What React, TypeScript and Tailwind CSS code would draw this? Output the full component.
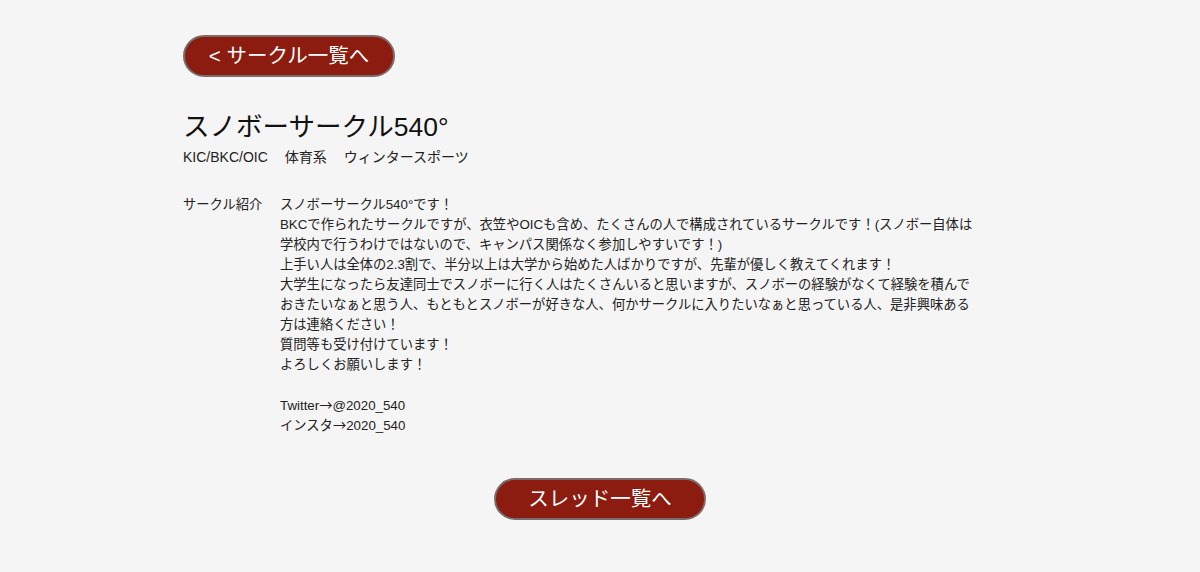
import React from "react";

const Arrow = () => (
  <span style={{ fontFamily: '"Noto Sans CJK JP", sans-serif' }}>→</span>
);

const lines: React.ReactNode[] = [
  "スノボーサークル540°です！",
  "BKCで作られたサークルですが、衣笠やOICも含め、たくさんの人で構成されているサークルです！(スノボー自体は",
  "学校内で行うわけではないので、キャンパス関係なく参加しやすいです！)",
  "上手い人は全体の2.3割で、半分以上は大学から始めた人ばかりですが、先輩が優しく教えてくれます！",
  "大学生になったら友達同士でスノボーに行く人はたくさんいると思いますが、スノボーの経験がなくて経験を積んで",
  "おきたいなぁと思う人、もともとスノボーが好きな人、何かサークルに入りたいなぁと思っている人、是非興味ある",
  "方は連絡ください！",
  "質問等も受け付けています！",
  "よろしくお願いします！",
  "",
  <>
    Twitter
    <Arrow />
    @2020_540
  </>,
  <>
    インスタ
    <Arrow />
    2020_540
  </>,
];

export default function App() {
  return (
    <div
      className="min-h-[572px] w-full bg-[#f5f5f5] text-[#222]"
      style={{ fontFamily: '"Liberation Sans", "Noto Sans CJK JP", sans-serif' }}
    >
      <div className="pl-[183px] pt-[35px] pb-[52px]">
        <button className="flex h-[42px] w-[212px] items-center justify-center rounded-full border-2 border-[#7a6c6a] bg-[#8c1b10] text-[20.5px] text-white">
          &lt; サークル一覧へ
        </button>
        <h1 className="mt-[32px] text-[26.5px] leading-[36px] font-normal text-[#111]">
          スノボーサークル540°
        </h1>
        <div className="mt-[2px] flex gap-[17px] text-[14px] leading-[20px]">
          <span>KIC/BKC/OIC</span>
          <span>体育系</span>
          <span>ウィンタースポーツ</span>
        </div>
        <div className="mt-[28px] flex text-[13.3px] leading-[20px]">
          <div className="w-[97px] shrink-0">サークル紹介</div>
          <div className="whitespace-nowrap">
            {lines.map((l, i) => (
              <div key={i} className="h-[20px]">
                {l}
              </div>
            ))}
          </div>
        </div>
      </div>
      <div className="flex justify-center">
        <button className="-mt-[9px] flex h-[42px] w-[212px] items-center justify-center rounded-full border-2 border-[#7a6c6a] bg-[#8c1b10] text-[20.5px] text-white">
          スレッド一覧へ
        </button>
      </div>
    </div>
  );
}
